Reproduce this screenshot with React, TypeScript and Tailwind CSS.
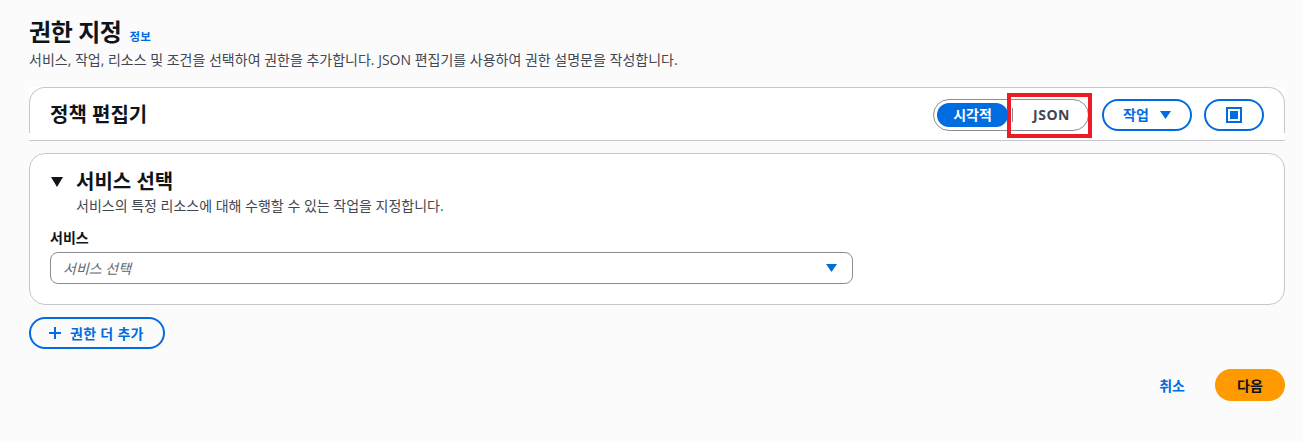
export default function App() {
  return (
    <div className="h-[442px] w-[1302px] overflow-hidden bg-[#fbfbfc] pl-[29px] pr-[17px] pt-[17px] font-['Open_Sans','Noto_Sans_CJK_KR',sans-serif] text-[#0f141a]">
      <div className="flex items-baseline">
        <h1 className="text-[24px] leading-[30px] font-bold tracking-[-0.4px]">권한 지정</h1>
        <a className="ml-[8px] text-[11.5px] font-bold leading-4 text-[#006ce0]">정보</a>
      </div>
      <p className="mt-[3px] text-[14px] leading-5 text-[#424650]">서비스, 작업, 리소스 및 조건을 선택하여 권한을 추가합니다. JSON 편집기를 사용하여 권한 설명문을 작성합니다.</p>

      <div className="relative mt-[17px] h-[54px] bg-white">
        <div className="absolute inset-x-0 top-0 h-[46px] rounded-t-2xl border-x border-t border-[#c6c6cd]" />
        <div className="absolute inset-x-0 bottom-0 h-px rounded-b-sm bg-[#c6c6cd]" />
        <div className="relative flex h-[54px] items-center justify-between pl-[21px] pr-[21px] pt-[1px]">
          <h2 className="text-[20px] font-bold leading-6">정책 편집기</h2>
          <div className="flex items-center">
            <div className="relative flex h-[32px] w-[156px] items-center rounded-full border border-[#8c8c94] bg-white pl-[3px]">
              <span className="flex h-[24px] w-[71px] items-center justify-center rounded-full bg-[#006ce0] text-[14px] font-bold text-white">시각적</span>
              <span className="ml-[4px] h-[14px] w-px bg-[#8c8c94]" />
              <span className="flex-1 pl-[2px] text-center text-[14px] font-bold tracking-[0.5px] text-[#424650]">JSON</span>
              <span className="absolute -top-[7px] left-[73px] h-[45px] w-[85px] border-[4px] border-[#ed1c24]" />
            </div>
            <button className="ml-[13px] flex h-[32px] w-[90px] items-center justify-center rounded-full border-2 border-[#006ce0] text-[14px] font-bold text-[#006ce0]">
              작업
              <svg className="ml-[11px]" width="11" height="8" viewBox="0 0 11 8"><path d="M0 0H11L5.5 8Z" fill="#006ce0" /></svg>
            </button>
            <button className="ml-[12px] flex h-[32px] w-[60px] items-center justify-center rounded-full border-2 border-[#006ce0]">
              <svg width="16" height="16" viewBox="0 0 16 16"><path d="M0 0H16V16H0Z M2 2V14H14V2Z" fillRule="evenodd" fill="#006ce0" /><rect x="4" y="4" width="8" height="8" fill="#006ce0" /></svg>
            </button>
          </div>
        </div>
      </div>

      <div className="mt-[12px] h-[152px] rounded-2xl border border-[#c6c6cd] bg-white pl-[20px] pr-[431px] pt-[14px]">
        <div className="flex items-center">
          <svg width="14" height="10" viewBox="0 0 14 10"><path d="M1 0H13L7 10Z" fill="#0f141a" /></svg>
          <h3 className="ml-[12px] text-[20px] font-bold leading-[28px]">서비스 선택</h3>
        </div>
        <p className="ml-[26px] text-[14px] leading-5 text-[#424650]">서비스의 특정 리소스에 대해 수행할 수 있는 작업을 지정합니다.</p>
        <label className="mt-[12px] block text-[14px] font-bold leading-5">서비스</label>
        <div className="mt-[4px] flex h-[32px] items-center justify-between rounded-lg border border-[#8c8c94] bg-white pl-[12px] pr-[15px]">
          <span className="text-[14px] italic text-[#656871]">서비스 선택</span>
          <svg width="11" height="8" viewBox="0 0 11 8"><path d="M0 0H11L5.5 8Z" fill="#006ce0" /></svg>
        </div>
      </div>

      <button className="mt-[12px] flex h-[32px] w-[136px] items-center rounded-full border-2 border-[#006ce0] pl-[17px] text-[14px] font-bold text-[#006ce0]">
        <svg width="14" height="14" viewBox="0 0 14 14"><path d="M7 1V13M1 7H13" stroke="#006ce0" strokeWidth="2" /></svg>
        <span className="ml-[8px] tracking-[0.3px]">권한 더 추가</span>
      </button>

      <div className="mt-[20px] flex items-center justify-end">
        <a className="text-[14px] font-bold text-[#006ce0]">취소</a>
        <button className="ml-[30px] h-[32px] w-[70px] rounded-full bg-[#ff9900] text-[14px] font-bold text-[#0f141a]">다음</button>
      </div>
    </div>
  );
}
